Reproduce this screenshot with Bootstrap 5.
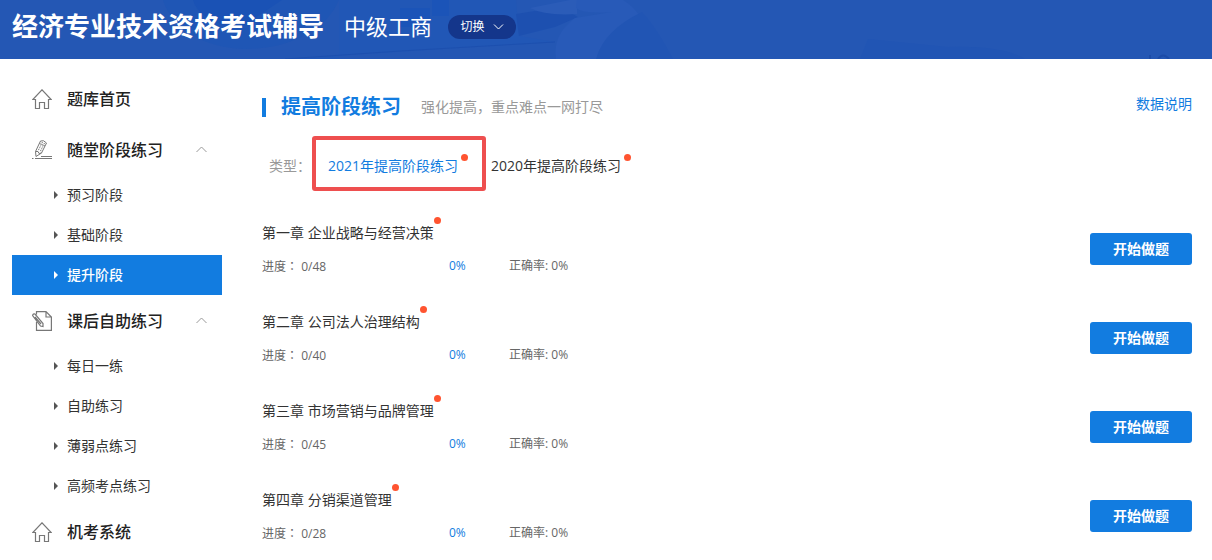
<!DOCTYPE html>
<html lang="zh-CN">
<head>
<meta charset="utf-8">
<meta name="viewport" content="width=device-width, initial-scale=1">
<title>经济专业技术资格考试辅导</title>
<link href="https://cdn.jsdelivr.net/npm/bootstrap@5.3.0/dist/css/bootstrap.min.css" rel="stylesheet">
<style>
:root { --brand: #127ce0; --dot: #ff5430; }
body { font-family: "Open Sans", "Noto Sans CJK SC", sans-serif; font-size: 14px; line-height: 20px; color: #333; background: #fff; }
a { text-decoration: none; }
.topbar { height: 59px; background: #2457b4; color: #fff; padding: 0 12px 8px; overflow: hidden; }
.topbar-art { position: absolute; left: 0; top: 0; width: 1212px; height: 59px; }
.site-title { font-size: 26px; line-height: 36px; font-weight: 700; }
.site-course { font-size: 22px; line-height: 32px; margin-left: 20px; }
.switch-btn { height: 24px; width: 68px; margin: 3px 0 0 16px; background: #14368b; color: #fff; font-size: 12px; line-height: 16px; border: 0; border-radius: 12px; }
.side { width: 210px; margin-left: 12px; padding-top: 14px; }
.side-head { height: 51px; width: 100%; padding: 0 15px 0 20px; gap: 15px; border: 0; background: none; font-size: 16px; font-weight: 500; color: #222; text-align: left; }
.side-head svg, .switch-btn svg { flex: none; }
.side-sub { height: 40px; padding-left: 42px; color: #333; gap: 9px; }
.side-sub::before { content: ""; border: solid transparent; border-width: 4px 0 4px 4px; border-left-color: #555; }
.side-sub.active { background: var(--brand); color: #fff; font-weight: 500; }
.side-sub.active::before { border-left-color: #fff; }
.content-area { padding: 32px 20px 0 40px; min-width: 0; }
.page-title { font-size: 20px; line-height: 32px; font-weight: 700; color: var(--brand); }
.page-title::before { content: ""; width: 4px; height: 19px; background: var(--brand); margin-right: 15px; }
.page-note { color: #999; margin-left: 20px; }
.data-link { margin: 3px 0 0 auto; align-self: flex-start; }
.type-row { margin-top: 13px; padding-left: 7px; line-height: 24px; }
.type-label { color: #999; width: 43px; }
.type-label, .type-other { padding-top: 4px; }
.picked { border: 4px solid #ee4f4f; border-radius: 3px; padding: 14px 24px 9px 12px; height: 55px; margin-right: 5px; }
.dotted { position: relative; }
.dotted::after { content: ""; position: absolute; left: 100%; top: -6px; width: 7px; height: 7px; border-radius: 50%; background: var(--dot); }
.type-row .dotted::after { margin-left: 3px; top: -2px; }
.link-brand { color: var(--brand); }
.link-dark-text { color: #333; }
.chapters { margin-top: 13px; }
.chapter { height: 89px; padding-top: 19px; }
.stats { margin-top: 13px; font-size: 12px; color: #666; }
.stat-progress { width: 187px; }
.stat-percent { width: 60px; color: var(--brand); }
.mid-colon { font-family: "Noto Sans CJK TC", sans-serif; }
.start-btn { width: 102px; height: 32px; margin-top: 10px; padding: 0; border: 0; border-radius: 3px; background: var(--brand); color: #fff; font-size: 14px; font-weight: 700; }
</style>
</head>
<body>
<header class="topbar position-relative d-flex align-items-center">
  <svg class="topbar-art" viewBox="0 0 1212 59" aria-hidden="true">
    <path fill="#1f56b5" d="M163 0C172 29 205 48 244 49C290 49 326 30 339 0Z"/>
    <path fill="#1a52b5" d="M193 0Q198 20 238 29L282 0Z"/>
    <path fill="#2157b6" d="M339 0H516L519 36L555 42L285 59H339Z"/>
    <path fill="#1b54b8" d="M400 8h30v19h-30zM432 0h17v16h-17z"/>
    <path fill="none" stroke="#1d50af" d="M285 59L400 51L555 42"/>
    <path fill="#1d50b0" d="M516 14L560 7L578 17L555 27L519 36Z"/>
    <path fill="#2b5cb8" d="M530 8L570 0H577V14Q545 16 530 8Z"/>
    <path fill="#285ab8" d="M577 0H623Q644 12 663 59H556Q552 35 575 18L612 12Q583 14 576 8Z"/>
    <path fill="#2155b4" d="M596 59Q604 30 642 12Q656 27 673 59Z"/>
    <path fill="#2155b4" d="M860 59L868 39L948 47Q1002 45 1025 59Z"/>
    <path fill="none" stroke="#1c4ca8" stroke-width="2" d="M1150 55v4M1158 59q5-7 11 0"/>
  </svg>
  <h1 class="site-title position-relative mb-0">经济专业技术资格考试辅导</h1>
  <span class="site-course position-relative">中级工商</span>
  <button type="button" class="switch-btn position-relative d-flex align-items-center justify-content-center gap-2 p-0">切换
    <svg width="11" height="6" viewBox="0 0 11 6" fill="none" stroke="#fff"><path d="M1 .5L5.500 5L10 .5"/></svg>
  </button>
</header>

<div class="d-flex">
  <nav class="side flex-shrink-0" aria-label="题库">
    <a href="#" class="side-head d-flex align-items-center">
      <svg width="20" height="20" viewBox="0 0 20 20" fill="none" stroke="#777" stroke-width="1.200"><path d="M3.500 10.500H.8L10 .8l9.200 9.700h-2.700v9h-4v-6h-5v6h-4z"/></svg>
      <span>题库首页</span></a>
    <button type="button" class="side-head d-flex align-items-center">
      <svg width="20" height="20" viewBox="0 0 20 20" fill="none" stroke="#777"><path d="M3.500 11.500L8.500 1Q11.500-.5 14.500 3L9.500 13L4 16.500ZM3.500 11.500L6 11.500L7 13.500L9.500 13"/><path stroke-dasharray="1.500 1" d="M10.500 2L6 11M12.500 3L8 12M7.500 3.500L13 6"/><path d="M9 16.500h11M0 18.500h1.500M3 18.500h17"/></svg>
      <span>随堂阶段练习</span>
      <svg class="ms-auto" width="11" height="7" viewBox="0 0 11 7" fill="none" stroke="#999"><path d="M.5 6L5.500 1L10.500 6"/></svg></button>
    <a href="#" class="side-sub d-flex align-items-center">预习阶段</a>
    <a href="#" class="side-sub d-flex align-items-center">基础阶段</a>
    <a href="#" class="side-sub active d-flex align-items-center" aria-current="page">提升阶段</a>
    <button type="button" class="side-head d-flex align-items-center">
      <svg width="20" height="20" viewBox="0 0 20 20" fill="none" stroke="#777" stroke-width="1.200"><path d="M4.500 3.500V.6H14L19.400 6v13.400H4.500V11M14 .6V6h5.400M.6 4.500Q1 2.500 3 3L11 12.500V15.500L8.500 15ZM3 6L9 13"/></svg>
      <span>课后自助练习</span>
      <svg class="ms-auto" width="11" height="7" viewBox="0 0 11 7" fill="none" stroke="#999"><path d="M.5 6L5.500 1L10.500 6"/></svg></button>
    <a href="#" class="side-sub d-flex align-items-center">每日一练</a>
    <a href="#" class="side-sub d-flex align-items-center">自助练习</a>
    <a href="#" class="side-sub d-flex align-items-center">薄弱点练习</a>
    <a href="#" class="side-sub d-flex align-items-center">高频考点练习</a>
    <a href="#" class="side-head d-flex align-items-center">
      <svg width="20" height="20" viewBox="0 0 20 20" fill="none" stroke="#777" stroke-width="1.200"><path d="M3.500 10.500H.8L10 .8l9.200 9.700h-2.700v9h-4v-6h-5v6h-4z"/></svg>
      <span>机考系统</span></a>
  </nav>

  <main class="content-area flex-grow-1">
    <div class="d-flex align-items-center">
      <h2 class="page-title d-flex align-items-center mb-0">提高阶段练习</h2>
      <span class="page-note">强化提高，重点难点一网打尽</span>
      <a href="#" class="link-brand data-link">数据说明</a>
    </div>
    <div class="type-row d-flex align-items-center">
      <span class="type-label">类型：</span>
      <div class="picked"><a href="#" class="link-brand dotted">2021年提高阶段练习</a></div>
      <div class="type-other"><a href="#" class="link-dark-text dotted">2020年提高阶段练习</a></div>
    </div>
    <div class="chapters">
      <section class="chapter d-flex justify-content-between">
        <div><span class="dotted">第一章 企业战略与经营决策</span>
          <div class="stats d-flex"><span class="stat-progress">进度<span class="mid-colon" lang="zh-TW">：</span> 0/48</span><span class="stat-percent">0%</span><span>正确率: 0%</span></div></div>
        <button type="button" class="start-btn">开始做题</button>
      </section>
      <section class="chapter d-flex justify-content-between">
        <div><span class="dotted">第二章 公司法人治理结构</span>
          <div class="stats d-flex"><span class="stat-progress">进度<span class="mid-colon" lang="zh-TW">：</span> 0/40</span><span class="stat-percent">0%</span><span>正确率: 0%</span></div></div>
        <button type="button" class="start-btn">开始做题</button>
      </section>
      <section class="chapter d-flex justify-content-between">
        <div><span class="dotted">第三章 市场营销与品牌管理</span>
          <div class="stats d-flex"><span class="stat-progress">进度<span class="mid-colon" lang="zh-TW">：</span> 0/45</span><span class="stat-percent">0%</span><span>正确率: 0%</span></div></div>
        <button type="button" class="start-btn">开始做题</button>
      </section>
      <section class="chapter d-flex justify-content-between">
        <div><span class="dotted">第四章 分销渠道管理</span>
          <div class="stats d-flex"><span class="stat-progress">进度<span class="mid-colon" lang="zh-TW">：</span> 0/28</span><span class="stat-percent">0%</span><span>正确率: 0%</span></div></div>
        <button type="button" class="start-btn">开始做题</button>
      </section>
    </div>
  </main>
</div>
<script src="https://cdn.jsdelivr.net/npm/bootstrap@5.3.0/dist/js/bootstrap.bundle.min.js"></script>
</body>
</html>
